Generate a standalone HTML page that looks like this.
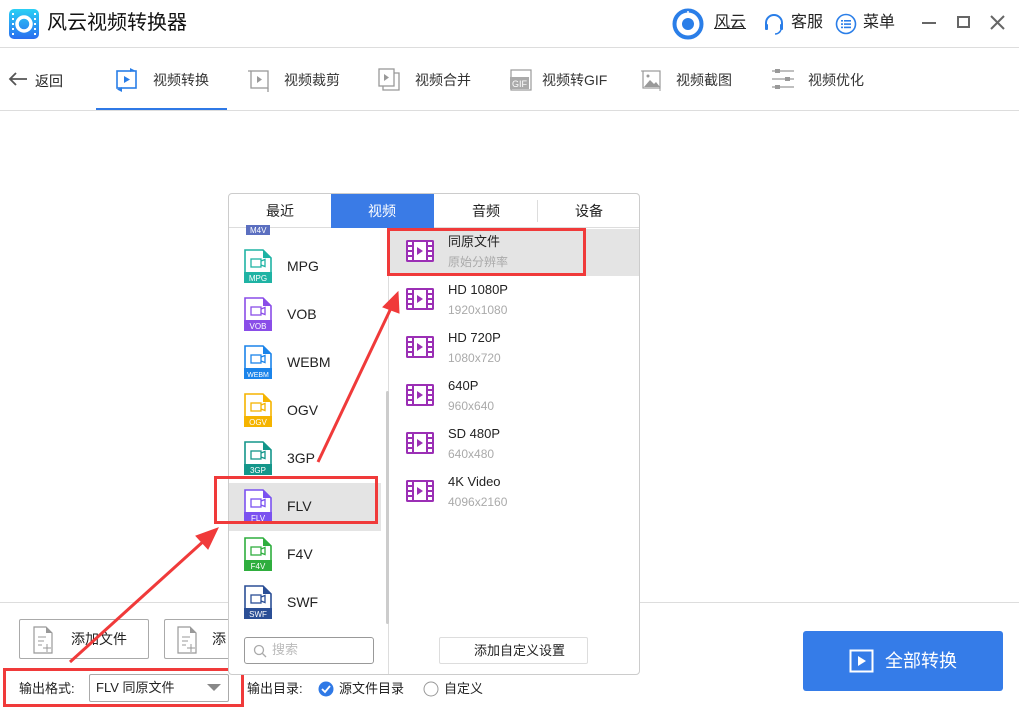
<!DOCTYPE html>
<html><head><meta charset="utf-8">
<style>
*{margin:0;padding:0;box-sizing:border-box}
body{width:1019px;height:716px;background:#fff;position:relative;overflow:hidden;font-family:"Liberation Sans","Noto Sans CJK SC",sans-serif;color:#222}
.a{position:absolute}
.t{position:absolute;white-space:nowrap;line-height:1}
.fi{position:absolute;left:244px;width:28px;height:34px}
.lbl{font-size:14px;left:287px}
.film{position:absolute;left:406px;width:28px;height:22px}
.ti{position:absolute;left:448px;font-size:13px;color:#222;white-space:nowrap;line-height:1}
.su{position:absolute;left:448px;font-size:12px;color:#aaa;white-space:nowrap;line-height:1}
</style></head><body>
<!-- title bar -->
<svg class="a" style="left:9px;top:9px" width="30" height="30" viewBox="0 0 30 30"><defs><linearGradient id="g" x1="0" y1="0" x2="0" y2="1"><stop offset="0" stop-color="#2ad0f5"/><stop offset="1" stop-color="#2a6ef0"/></linearGradient></defs><rect width="30" height="30" rx="5" fill="url(#g)"/><g fill="#fff"><rect x="3" y="4" width="2" height="2"/><rect x="3" y="9" width="2" height="2"/><rect x="3" y="14" width="2" height="2"/><rect x="3" y="19" width="2" height="2"/><rect x="3" y="24" width="2" height="2"/><rect x="25" y="4" width="2" height="2"/><rect x="25" y="9" width="2" height="2"/><rect x="25" y="14" width="2" height="2"/><rect x="25" y="19" width="2" height="2"/><rect x="25" y="24" width="2" height="2"/></g><circle cx="15" cy="15" r="7" fill="none" stroke="#fff" stroke-width="3.5"/></svg>
<div class="t" style="left:47px;top:13px;font-size:20px;color:#111">风云视频转换器</div>
<svg class="a" style="left:672px;top:8px" width="32" height="32"><circle cx="16" cy="16" r="13.5" fill="none" stroke="#2a7ee8" stroke-width="4"/><circle cx="16" cy="16" r="6" fill="#2a7ee8"/><line x1="16" y1="3" x2="16" y2="9" stroke="#fff" stroke-width="1.5"/></svg>
<div class="t" style="left:714px;top:15px;font-size:16px;text-decoration:underline">风云</div>
<svg class="a" style="left:763px;top:13px" width="22" height="22"><path d="M3 13 V10 A8 8 0 0 1 19 10 V13" fill="none" stroke="#2a7ee8" stroke-width="2"/><rect x="2" y="11" width="3" height="6" rx="1" fill="#2a7ee8"/><rect x="17" y="11" width="3" height="6" rx="1" fill="#2a7ee8"/><path d="M18 17 Q16 21 12 21" fill="none" stroke="#2a7ee8" stroke-width="1.5"/></svg>
<div class="t" style="left:791px;top:15px;font-size:16px">客服</div>
<svg class="a" style="left:835px;top:13px" width="22" height="22"><circle cx="11" cy="11" r="9.5" fill="none" stroke="#2a7ee8" stroke-width="1.6"/><g fill="#2a7ee8"><rect x="6" y="7" width="2" height="1.6"/><rect x="9" y="7" width="7" height="1.6"/><rect x="6" y="10.3" width="2" height="1.6"/><rect x="9" y="10.3" width="7" height="1.6"/><rect x="6" y="13.6" width="2" height="1.6"/><rect x="9" y="13.6" width="7" height="1.6"/></g></svg>
<div class="t" style="left:863px;top:15px;font-size:16px">菜单</div>
<div class="a" style="left:922px;top:22px;width:14px;height:2px;background:#666"></div>
<div class="a" style="left:957px;top:16px;width:13px;height:12px;border:2px solid #666"></div>
<svg class="a" style="left:990px;top:15px" width="15" height="15"><path d="M1 1 L14 14 M14 1 L1 14" stroke="#666" stroke-width="2"/></svg>
<div class="a" style="left:0;top:47px;width:1019px;height:1px;background:#ddd"></div>
<!-- nav -->
<svg class="a" style="left:8px;top:71px" width="20" height="16"><path d="M19 8 H2 M8 2 L2 8 L8 14" fill="none" stroke="#555" stroke-width="1.8"/></svg>
<div class="t" style="left:35px;top:74px;font-size:14px">返回</div>
<svg class="a" style="left:115px;top:67px" width="24" height="26"><rect x="2" y="4" width="19" height="17" fill="none" stroke="#2a7ee8" stroke-width="1.6"/><path d="M9 9 L15 12.5 L9 16Z" fill="#2a7ee8"/><path d="M15 1 L20 3.5 L15 5" fill="#2a7ee8"/><path d="M7 20 L2 22.5 L7 25" fill="#2a7ee8"/></svg>
<div class="t" style="left:153px;top:73px;font-size:14px;color:#333">视频转换</div>
<div class="a" style="left:96px;top:108px;width:131px;height:3px;background:#2f79e6"></div>
<svg class="a" style="left:247px;top:67px" width="24" height="26"><rect x="4" y="4" width="17" height="17" fill="none" stroke="#999" stroke-width="1.3"/><path d="M10 9 L15 12.5 L10 16Z" fill="#999"/><path d="M1 4 H4 M21 21 V25" stroke="#999" stroke-width="1.3"/></svg>
<div class="t" style="left:284px;top:73px;font-size:14px;color:#333">视频裁剪</div>
<svg class="a" style="left:377px;top:67px" width="24" height="26"><rect x="2" y="2" width="15" height="17" fill="none" stroke="#999" stroke-width="1.3"/><path d="M17 6 H22 V23 H6 V19" fill="none" stroke="#999" stroke-width="1.3"/><path d="M7 7 L12 10.5 L7 14Z" fill="#999"/></svg>
<div class="t" style="left:415px;top:73px;font-size:14px;color:#333">视频合并</div>
<svg class="a" style="left:508px;top:67px" width="26" height="26"><rect x="3" y="3" width="20" height="20" fill="none" stroke="#999" stroke-width="1.2"/><rect x="2" y="10" width="19" height="12" fill="#aaa"/><text x="4" y="20" font-size="9" fill="#fff" font-family="Liberation Sans">GIF</text></svg>
<div class="t" style="left:542px;top:73px;font-size:14px;color:#333">视频转GIF</div>
<svg class="a" style="left:640px;top:67px" width="24" height="26"><rect x="3" y="4" width="17" height="17" fill="none" stroke="#999" stroke-width="1.2"/><circle cx="8" cy="9" r="1.5" fill="#999"/><path d="M4 20 L10 13 L14 17 L16 15 L20 20Z" fill="#999"/><path d="M1 4 H3 M20 21 V24" stroke="#999"/></svg>
<div class="t" style="left:676px;top:73px;font-size:14px;color:#333">视频截图</div>
<svg class="a" style="left:770px;top:67px" width="26" height="26"><path d="M2 4 H24 M2 12 H24 M2 20 H24" stroke="#999" stroke-width="1.2"/><rect x="5" y="2" width="5" height="4" fill="#999"/><rect x="15" y="10" width="5" height="4" fill="#999"/><rect x="5" y="18" width="5" height="4" fill="#999"/></svg>
<div class="t" style="left:808px;top:73px;font-size:14px;color:#333">视频优化</div>
<div class="a" style="left:0;top:110px;width:1019px;height:1px;background:#ddd"></div>
<!-- bottom area -->
<div class="a" style="left:0;top:602px;width:1019px;height:1px;background:#ddd"></div>
<div class="a" style="left:19px;top:619px;width:130px;height:40px;border:1px solid #aaa;border-radius:2px"></div>
<svg class="a" style="left:32px;top:625px" width="22" height="30"><path d="M2 2 H14 L20 8 V28 H2Z" fill="none" stroke="#999" stroke-width="1.2"/><path d="M14 2 V8 H20Z" fill="#999"/><path d="M6 12 H14 M6 16 H12 M6 20 H10 M15 19 V27 M11 23 H19" stroke="#999"/></svg>
<div class="t" style="left:71px;top:632px;font-size:14px">添加文件</div>
<div class="a" style="left:164px;top:619px;width:70px;height:40px;border:1px solid #aaa;border-right:none;border-radius:2px"></div>
<svg class="a" style="left:176px;top:625px" width="22" height="30"><path d="M2 2 H14 L20 8 V28 H2Z" fill="none" stroke="#999" stroke-width="1.2"/><path d="M14 2 V8 H20Z" fill="#999"/><path d="M6 12 H14 M6 16 H12 M6 20 H10 M15 19 V27 M11 23 H19" stroke="#999"/></svg>
<div class="t" style="left:212px;top:632px;font-size:14px">添</div>
<div class="t" style="left:19px;top:682px;font-size:13px">输出格式:</div>
<div class="a" style="left:89px;top:674px;width:140px;height:28px;border:1px solid #aaa;border-radius:2px"></div>
<div class="t" style="left:96px;top:681px;font-size:13px">FLV 同原文件</div>
<svg class="a" style="left:207px;top:684px" width="14" height="8"><path d="M0 0 H14 L7 7Z" fill="#888"/></svg>
<div class="a" style="left:3px;top:668px;width:241px;height:39px;border:3px solid #f03a3a"></div>
<div class="t" style="left:247px;top:682px;font-size:13px">输出目录:</div>
<svg class="a" style="left:318px;top:681px" width="16" height="16"><circle cx="8" cy="8" r="7.5" fill="#2f79e6"/><path d="M4 8 L7 11 L12 5" fill="none" stroke="#fff" stroke-width="1.8"/></svg>
<div class="t" style="left:339px;top:682px;font-size:13px">源文件目录</div>
<svg class="a" style="left:423px;top:681px" width="16" height="16"><circle cx="8" cy="8" r="7" fill="#fff" stroke="#999"/></svg>
<div class="t" style="left:444px;top:682px;font-size:13px">自定义</div>
<div class="a" style="left:803px;top:631px;width:200px;height:60px;background:#357ce8;border-radius:3px"></div>
<svg class="a" style="left:849px;top:649px" width="26" height="24"><rect x="1.5" y="1.5" width="22" height="21" fill="none" stroke="#fff" stroke-width="2"/><path d="M9 7 L17 12 L9 17Z" fill="#fff"/></svg>
<div class="t" style="left:885px;top:652px;font-size:18px;color:#fff">全部转换</div>
<!-- popup -->
<div class="a" style="left:228px;top:193px;width:412px;height:482px;border:1px solid #ccc;border-radius:4px;background:#fff;overflow:hidden">
 <div class="a" style="left:0;top:0;width:412px;height:34px;border-bottom:1px solid #ddd"></div>
 <div class="a" style="left:102px;top:0;width:103px;height:34px;background:#3a7be6"></div>
 <div class="a" style="left:308px;top:6px;width:1px;height:22px;background:#ddd"></div>
 <div class="t" style="left:37px;top:10px;font-size:14px">最近</div>
 <div class="t" style="left:139px;top:10px;font-size:14px;color:#fff">视频</div>
 <div class="t" style="left:243px;top:10px;font-size:14px">音频</div>
 <div class="t" style="left:346px;top:10px;font-size:14px">设备</div>
 <div class="a" style="left:159px;top:34px;width:1px;height:448px;background:#ddd"></div>
 <div class="a" style="left:157px;top:197px;width:3px;height:233px;background:#ccc;border-radius:2px"></div>
 <div class="a" style="left:0;top:289px;width:152px;height:48px;background:#e4e4e4"></div>
 <div class="a" style="left:160px;top:35px;width:252px;height:47px;background:#e4e4e4"></div>
 <div class="a" style="left:15px;top:443px;width:130px;height:27px;border:1px solid #999;border-radius:3px"></div>
 <svg class="a" style="left:24px;top:450px" width="14" height="14"><circle cx="6" cy="6" r="4.5" fill="none" stroke="#aaa" stroke-width="1.3"/><path d="M9.5 9.5 L13 13" stroke="#aaa" stroke-width="1.3"/></svg>
 <div class="t" style="left:43px;top:449px;font-size:13px;color:#bbb">搜索</div>
 <div class="a" style="left:210px;top:443px;width:149px;height:27px;border:1px solid #ddd;border-radius:2px"></div>
 <div class="t" style="left:245px;top:450px;font-size:13px">添加自定义设置</div>
</div>
<!-- file icons -->
<svg class="fi" style="top:215px;height:20px" viewBox="0 14 28 20"><rect x="2" y="24" width="24" height="10" fill="#5b6fc0"/><text x="6" y="32" font-size="8" fill="#fff" font-family="Liberation Sans">M4V</text></svg>
<svg width="0" height="0" style="position:absolute"><defs><g id="cam"><rect x="7" y="10" width="10" height="8" fill="none" stroke-width="1.3"/><path d="M17 12 L21 10.5 V17.5 L17 16" fill="none" stroke-width="1.3"/></g></defs></svg>
<svg class="fi" style="top:249px" viewBox="0 0 28 34"><path d="M1 1 H19 L27 9 V33 H1Z" fill="#fff" stroke="#1fb3a4" stroke-width="1.6"/><path d="M19 1 V9 H27Z" fill="#1fb3a4"/><use href="#cam" stroke="#1fb3a4"/><rect x="0" y="23" width="28" height="11" fill="#1fb3a4"/><text x="14" y="32" font-size="8" fill="#fff" text-anchor="middle" font-family="Liberation Sans">MPG</text></svg>
<div class="t lbl" style="top:259px">MPG</div>
<svg class="fi" style="top:297px" viewBox="0 0 28 34"><path d="M1 1 H19 L27 9 V33 H1Z" fill="#fff" stroke="#8a4de8" stroke-width="1.6"/><path d="M19 1 V9 H27Z" fill="#8a4de8"/><use href="#cam" stroke="#8a4de8"/><rect x="0" y="23" width="28" height="11" fill="#8a4de8"/><text x="14" y="32" font-size="8" fill="#fff" text-anchor="middle" font-family="Liberation Sans">VOB</text></svg>
<div class="t lbl" style="top:307px">VOB</div>
<svg class="fi" style="top:345px" viewBox="0 0 28 34"><path d="M1 1 H19 L27 9 V33 H1Z" fill="#fff" stroke="#1b84ea" stroke-width="1.6"/><path d="M19 1 V9 H27Z" fill="#1b84ea"/><use href="#cam" stroke="#1b84ea"/><rect x="0" y="23" width="28" height="11" fill="#1b84ea"/><text x="14" y="32" font-size="7" fill="#fff" text-anchor="middle" font-family="Liberation Sans">WEBM</text></svg>
<div class="t lbl" style="top:355px">WEBM</div>
<svg class="fi" style="top:393px" viewBox="0 0 28 34"><path d="M1 1 H19 L27 9 V33 H1Z" fill="#fff" stroke="#f5b400" stroke-width="1.6"/><path d="M19 1 V9 H27Z" fill="#f5b400"/><use href="#cam" stroke="#f5b400"/><rect x="0" y="23" width="28" height="11" fill="#f5b400"/><text x="14" y="32" font-size="8" fill="#fff" text-anchor="middle" font-family="Liberation Sans">OGV</text></svg>
<div class="t lbl" style="top:403px">OGV</div>
<svg class="fi" style="top:441px" viewBox="0 0 28 34"><path d="M1 1 H19 L27 9 V33 H1Z" fill="#fff" stroke="#14968a" stroke-width="1.6"/><path d="M19 1 V9 H27Z" fill="#14968a"/><use href="#cam" stroke="#14968a"/><rect x="0" y="23" width="28" height="11" fill="#14968a"/><text x="14" y="32" font-size="8" fill="#fff" text-anchor="middle" font-family="Liberation Sans">3GP</text></svg>
<div class="t lbl" style="top:451px">3GP</div>
<svg class="fi" style="top:489px" viewBox="0 0 28 34"><path d="M1 1 H19 L27 9 V33 H1Z" fill="#fff" stroke="#7b52f0" stroke-width="1.6"/><path d="M19 1 V9 H27Z" fill="#7b52f0"/><use href="#cam" stroke="#7b52f0"/><rect x="0" y="23" width="28" height="11" fill="#7b52f0"/><text x="14" y="32" font-size="8" fill="#fff" text-anchor="middle" font-family="Liberation Sans">FLV</text></svg>
<div class="t lbl" style="top:499px">FLV</div>
<svg class="fi" style="top:537px" viewBox="0 0 28 34"><path d="M1 1 H19 L27 9 V33 H1Z" fill="#fff" stroke="#2fae3e" stroke-width="1.6"/><path d="M19 1 V9 H27Z" fill="#2fae3e"/><use href="#cam" stroke="#2fae3e"/><rect x="0" y="23" width="28" height="11" fill="#2fae3e"/><text x="14" y="32" font-size="8" fill="#fff" text-anchor="middle" font-family="Liberation Sans">F4V</text></svg>
<div class="t lbl" style="top:547px">F4V</div>
<svg class="fi" style="top:585px" viewBox="0 0 28 34"><path d="M1 1 H19 L27 9 V33 H1Z" fill="#fff" stroke="#2b4f96" stroke-width="1.6"/><path d="M19 1 V9 H27Z" fill="#2b4f96"/><use href="#cam" stroke="#2b4f96"/><rect x="0" y="23" width="28" height="11" fill="#2b4f96"/><text x="14" y="32" font-size="8" fill="#fff" text-anchor="middle" font-family="Liberation Sans">SWF</text></svg>
<div class="t lbl" style="top:595px">SWF</div>
<!-- film icons -->
<svg width="0" height="0" style="position:absolute"><defs><g id="film"><rect x="0" y="0" width="28" height="22" rx="1.5" fill="#9b2fb5"/><g fill="#fff"><rect x="2" y="2" width="4" height="3"/><rect x="2" y="7" width="4" height="3"/><rect x="2" y="12" width="4" height="3"/><rect x="2" y="17" width="4" height="3"/><rect x="22" y="2" width="4" height="3"/><rect x="22" y="7" width="4" height="3"/><rect x="22" y="12" width="4" height="3"/><rect x="22" y="17" width="4" height="3"/><rect x="8" y="2" width="12" height="18"/></g><path d="M11 7 L17 11 L11 15Z" fill="#9b2fb5"/></g></defs></svg>
<svg class="film" style="top:240px"><use href="#film"/></svg>
<div class="ti" style="top:235px">同原文件</div><div class="su" style="top:256px">原始分辨率</div>
<svg class="film" style="top:288px"><use href="#film"/></svg>
<div class="ti" style="top:283px">HD 1080P</div><div class="su" style="top:304px">1920x1080</div>
<svg class="film" style="top:336px"><use href="#film"/></svg>
<div class="ti" style="top:331px">HD 720P</div><div class="su" style="top:352px">1080x720</div>
<svg class="film" style="top:384px"><use href="#film"/></svg>
<div class="ti" style="top:379px">640P</div><div class="su" style="top:400px">960x640</div>
<svg class="film" style="top:432px"><use href="#film"/></svg>
<div class="ti" style="top:427px">SD 480P</div><div class="su" style="top:448px">640x480</div>
<svg class="film" style="top:480px"><use href="#film"/></svg>
<div class="ti" style="top:475px">4K Video</div><div class="su" style="top:496px">4096x2160</div>
<!-- red boxes -->
<div class="a" style="left:387px;top:228px;width:199px;height:48px;border:3px solid #f03a3a"></div>
<div class="a" style="left:214px;top:476px;width:164px;height:48px;border:3px solid #f03a3a"></div>
<!-- arrows -->
<svg class="a" style="left:0;top:0" width="1019" height="716"><g fill="#f03a3a" stroke="#f03a3a"><path d="M70 662 L206 539" stroke-width="3" fill="none"/><path d="M218 528 L196 536 L208 549Z"/><path d="M318 462 L392 306" stroke-width="3" fill="none"/><path d="M398 292 L383 307 L399 313Z"/></g></svg>
</body></html>
